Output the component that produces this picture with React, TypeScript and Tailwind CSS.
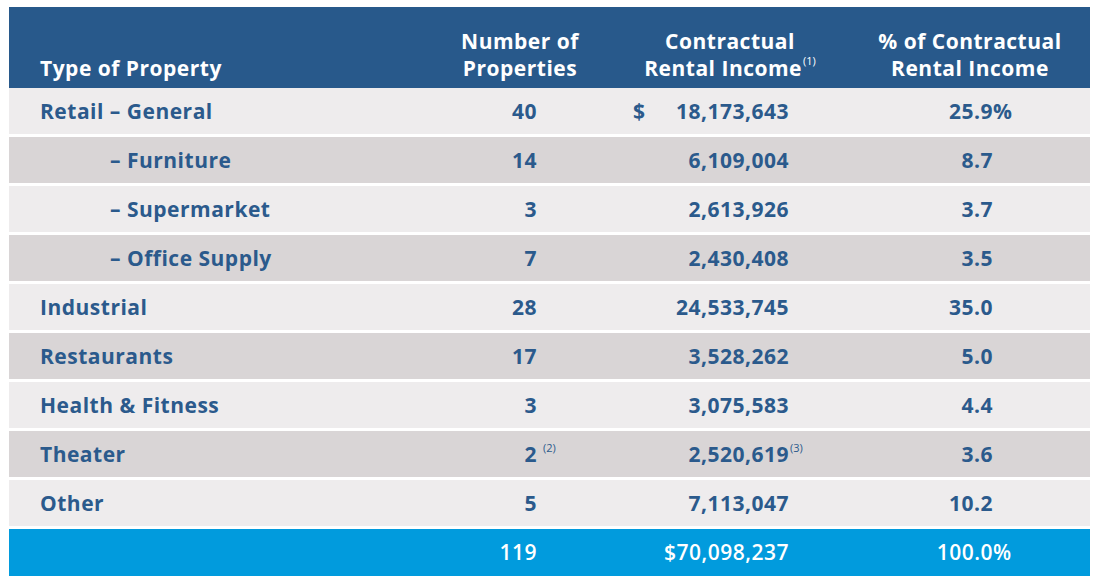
import React from "react";

type Row = {
  label: string;
  sub?: boolean;
  count: string;
  countSup?: string;
  income: string;
  incomeSup?: string;
  dollar?: boolean;
  pct: string;
  pctSign?: boolean;
};

const rows: Row[] = [
  { label: "Retail – General", count: "40", income: "18,173,643", dollar: true, pct: "25.9", pctSign: true },
  { label: "– Furniture", sub: true, count: "14", income: "6,109,004", pct: "8.7" },
  { label: "– Supermarket", sub: true, count: "3", income: "2,613,926", pct: "3.7" },
  { label: "– Office Supply", sub: true, count: "7", income: "2,430,408", pct: "3.5" },
  { label: "Industrial", count: "28", income: "24,533,745", pct: "35.0" },
  { label: "Restaurants", count: "17", income: "3,528,262", pct: "5.0" },
  { label: "Health & Fitness", count: "3", income: "3,075,583", pct: "4.4" },
  { label: "Theater", count: "2", countSup: "(2)", income: "2,520,619", incomeSup: "(3)", pct: "3.6" },
  { label: "Other", count: "5", income: "7,113,047", pct: "10.2" },
];

const font = { fontFamily: "'Open Sans', Lato, sans-serif" };

export default function App() {
  return (
    <div className="w-[1097px] h-[584px] bg-white pt-[7px] pl-[9px]" style={font}>
      <div className="w-[1081px] text-[21px] font-bold tracking-[0.5px]">
        {/* header */}
        <div className="flex h-[81px] bg-[#28598b] text-white leading-[27px] items-end pb-[6px]">
          <div className="w-[451px] pl-[31px]">Type of Property</div>
          <div className="w-[140px] pr-[20px] text-center">
            Number of
            <br />
            Properties
          </div>
          <div className="w-[260px] text-center">
            Contractual
            <br />
            Rental Income
            <span className="relative top-[-11px] text-[11px] leading-none font-normal tracking-normal ml-[1px]">(1)</span>
          </div>
          <div className="w-[230px] pr-[10px] text-center">
            % of Contractual
            <br />
            Rental Income
          </div>
        </div>
        {/* body */}
        {rows.map((r, i) => (
          <div
            key={r.label}
            className={`flex h-[49px] border-b-[3px] border-white items-center pt-[1px] text-[#2b5a8c] ${
              i % 2 === 0 ? "bg-[#eeeced]" : "bg-[#d9d5d6]"
            }`}
          >
            <div className={r.sub ? "w-[451px] pl-[101px]" : "w-[451px] pl-[31px]"}>{r.label}</div>
            <div className="w-[140px] pr-[63px] text-right">
              <span className="relative">
                {r.count}
                {r.countSup && (
                  <span className="absolute left-full top-[2px] ml-[6px] text-[11px] leading-none font-normal tracking-normal">
                    {r.countSup}
                  </span>
                )}
              </span>
            </div>
            <div className="w-[260px] pr-[71px] text-right relative">
              {r.dollar && <span className="absolute left-[33px]">$</span>}
              <span className="relative">
                {r.income}
                {r.incomeSup && (
                  <span className="absolute left-full top-[2px] ml-[1px] text-[11px] leading-none font-normal tracking-normal">
                    {r.incomeSup}
                  </span>
                )}
              </span>
            </div>
            <div className="w-[230px] pr-[97px] text-right">
              <span className="relative">
                {r.pct}
                {r.pctSign && <span className="absolute left-full">%</span>}
              </span>
            </div>
          </div>
        ))}
        {/* total */}
        <div className="flex h-[47px] bg-[#019bdd] items-center text-white font-semibold">
          <div className="w-[451px]" />
          <div className="w-[140px] pr-[63px] text-right">119</div>
          <div className="w-[260px] pr-[71px] text-right">$70,098,237</div>
          <div className="w-[230px] pr-[97px] text-right">
            <span className="relative">
              100.0<span className="absolute left-full">%</span>
            </span>
          </div>
        </div>
      </div>
    </div>
  );
}
